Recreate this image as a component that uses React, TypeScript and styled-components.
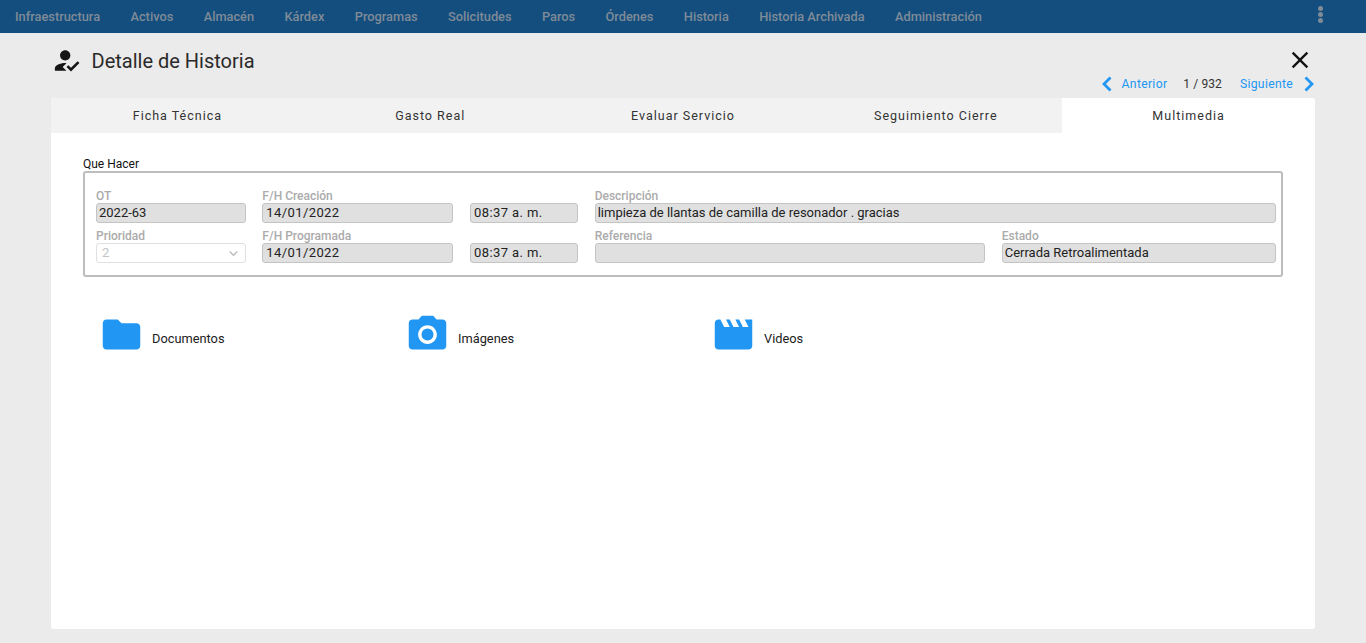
import React from "react";
import styled, { createGlobalStyle } from "styled-components";
import { MdFolder, MdHowToReg, MdMovie, MdPhotoCamera, MdClose, MdKeyboardArrowDown } from "react-icons/md";

const Global = createGlobalStyle`
  html, body { margin: 0; padding: 0; height: 100%; overflow: hidden; background: #ebebeb; }
  body { font-family: Roboto, "Liberation Sans", sans-serif; color: #212121; }
  * { box-sizing: border-box; }
`;

const Page = styled.div`
  height: 643px;
  display: flex;
  flex-direction: column;
`;

const TopBar = styled.nav`
  height: 33px;
  flex: none;
  background: #134e7f;
  display: flex;
  align-items: center;
  justify-content: space-between;
  padding: 0 43px 0 15px;
`;

const Menu = styled.div`
  display: flex;
  gap: 30.4px;
`;

const MenuItem = styled.span`
  font-size: 12.8px;
  font-weight: 500;
  line-height: 33px;
  color: #7f8b97;
`;

const Kebab = styled.div`
  display: flex;
  flex-direction: column;
  gap: 1px;
  margin-top: -5px;
`;

const Dot = styled.i`
  display: block;
  width: 5px;
  height: 5px;
  border-radius: 50%;
  background: #7f8b97;
`;

const Main = styled.main`
  flex: 1;
  display: flex;
  flex-direction: column;
  padding: 0 51px 14px;
`;

const Header = styled.header`
  height: 65px;
  flex: none;
  display: flex;
  justify-content: space-between;
`;

const TitleGroup = styled.div`
  display: flex;
  align-items: center;
  height: 56px;
`;

const TitleIcon = styled(MdHowToReg)`
  font-size: 31px;
  color: #161616;
  margin-right: 9.5px;
  margin-top: -2px;
`;

const Title = styled.h1`
  margin: 0;
  font-size: 20px;
  font-weight: 400;
  color: #2a2a2a;
`;

const Controls = styled.div`
  display: flex;
  flex-direction: column;
  align-items: flex-end;
`;

const CloseIcon = styled(MdClose)`
  font-size: 28px;
  color: #111;
  margin: 13px 1px 0 0;
`;

const Pager = styled.div`
  display: flex;
  align-items: center;
  height: 20px;
`;

const PagerLink = styled.span`
  font-size: 12.2px;
  letter-spacing: 0.3px;
  color: #2196f3;
`;

const PagerCount = styled.span`
  font-size: 12px;
  letter-spacing: 0.1px;
  color: #333;
  margin: -1px 18px 0 16px;
`;

const Chevron = styled.svg<{ $side: "left" | "right" }>`
  width: 11px;
  height: 16px;
  fill: none;
  stroke: #2196f3;
  stroke-width: 2.8;
  margin: ${(p) => (p.$side === "left" ? "0 10px 0 0" : "0 0 0 11px")};
`;

const Card = styled.section`
  flex: 1;
  background: #fff;
  border-radius: 3px;
  display: flex;
  flex-direction: column;
`;

const Tabs = styled.div`
  display: grid;
  grid-template-columns: repeat(5, 1fr);
  height: 35px;
  flex: none;
  background: #f2f2f2;
  border-radius: 3px 3px 0 0;
`;

const Tab = styled.div<{ $active?: boolean }>`
  display: flex;
  align-items: center;
  justify-content: center;
  font-size: 12.5px;
  letter-spacing: 1px;
  color: #333;
  background: ${(p) => (p.$active ? "#fff" : "transparent")};
  border-top-right-radius: ${(p) => (p.$active ? "3px" : "0")};
`;

const Body = styled.div`
  padding: 25px 32px 0;
`;

const GroupLabel = styled.div`
  font-size: 12px;
  line-height: 13px;
  color: #111;
`;

const Fieldset = styled.div`
  height: 106px;
  border: 2px solid #bdbdbd;
  border-radius: 3px;
  padding: 14px 5px 0 11px;
  display: grid;
  grid-template-columns: 149.7px 191px 108px 390.4px 274px;
  grid-auto-rows: 40px;
  column-gap: 16.67px;
`;

const Field = styled.div<{ $span?: number }>`
  grid-column: span ${(p) => p.$span ?? 1};
  display: flex;
  flex-direction: column;
  justify-content: flex-end;
  padding-bottom: 4px;
  min-width: 0;
`;

const FieldLabel = styled.label`
  font-size: 12px;
  line-height: 12px;
  height: 13px;
  font-weight: 500;
  color: #ababab;
  white-space: nowrap;
`;

const ReadOnly = styled.div`
  height: 20px;
  border: 1px solid #c4c4c4;
  border-radius: 3px;
  background: #e0e0e0;
  font-size: 13px;
  line-height: 18px;
  color: #222;
  padding-left: 2px;
  white-space: nowrap;
`;

const DateValue = styled.span`
  letter-spacing: 0.4px;
  padding-left: 1px;
`;

const SelectBox = styled.div`
  height: 20px;
  border: 1px solid #e0e0e0;
  border-radius: 3px;
  background: #fff;
  font-size: 13px;
  line-height: 18px;
  color: #c4c4c4;
  padding: 0 3px 0 5px;
  display: flex;
  align-items: center;
  justify-content: space-between;
`;

const SelectArrow = styled(MdKeyboardArrowDown)`
  font-size: 17px;
  color: #bdbdbd;
`;

const Media = styled.div`
  display: flex;
  padding: 35px 0 0 16px;
`;

const MediaItem = styled.div`
  width: 306px;
  display: flex;
  align-items: center;
  gap: 8px;
`;

const MediaLabel = styled.span`
  font-size: 12.8px;
  color: #212121;
  margin-top: 7px;
`;

const iconStyle = `font-size: 45px; color: #2196f3; flex: none;`;
const FolderIcon = styled(MdFolder)`${iconStyle}`;
const CameraIcon = styled(MdPhotoCamera)`${iconStyle}`;
const MovieIcon = styled(MdMovie)`${iconStyle}`;

const menu = ["Infraestructura", "Activos", "Almacén", "Kárdex", "Programas", "Solicitudes", "Paros", "Órdenes", "Historia", "Historia Archivada", "Administración"];
const tabs = ["Ficha Técnica", "Gasto Real", "Evaluar Servicio", "Seguimiento Cierre", "Multimedia"];

export default function App() {
  return (
    <Page>
      <Global />
      <TopBar>
        <Menu>
          {menu.map((m) => (
            <MenuItem key={m}>{m}</MenuItem>
          ))}
        </Menu>
        <Kebab>
          <Dot />
          <Dot />
          <Dot />
        </Kebab>
      </TopBar>
      <Main>
        <Header>
          <TitleGroup>
            <TitleIcon />
            <Title>Detalle de Historia</Title>
          </TitleGroup>
          <Controls>
            <CloseIcon />
            <Pager>
              <Chevron $side="left" viewBox="0 0 11 16">
                <path d="M9.5 1.5 3 8l6.5 6.5" />
              </Chevron>
              <PagerLink>Anterior</PagerLink>
              <PagerCount>1 / 932</PagerCount>
              <PagerLink>Siguiente</PagerLink>
              <Chevron $side="right" viewBox="0 0 11 16">
                <path d="M1.5 1.5 8 8l-6.5 6.5" />
              </Chevron>
            </Pager>
          </Controls>
        </Header>
        <Card>
          <Tabs>
            {tabs.map((t) => (
              <Tab key={t} $active={t === "Multimedia"}>
                {t}
              </Tab>
            ))}
          </Tabs>
          <Body>
            <GroupLabel>Que Hacer</GroupLabel>
            <Fieldset>
              <Field>
                <FieldLabel>OT</FieldLabel>
                <ReadOnly>2022-63</ReadOnly>
              </Field>
              <Field>
                <FieldLabel>F/H Creación</FieldLabel>
                <ReadOnly><DateValue>14/01/2022</DateValue></ReadOnly>
              </Field>
              <Field>
                <ReadOnly><DateValue>08:37 a. m.</DateValue></ReadOnly>
              </Field>
              <Field $span={2}>
                <FieldLabel>Descripción</FieldLabel>
                <ReadOnly>limpieza de llantas de camilla de resonador . gracias</ReadOnly>
              </Field>
              <Field>
                <FieldLabel>Prioridad</FieldLabel>
                <SelectBox>
                  2
                  <SelectArrow />
                </SelectBox>
              </Field>
              <Field>
                <FieldLabel>F/H Programada</FieldLabel>
                <ReadOnly><DateValue>14/01/2022</DateValue></ReadOnly>
              </Field>
              <Field>
                <ReadOnly><DateValue>08:37 a. m.</DateValue></ReadOnly>
              </Field>
              <Field>
                <FieldLabel>Referencia</FieldLabel>
                <ReadOnly />
              </Field>
              <Field>
                <FieldLabel>Estado</FieldLabel>
                <ReadOnly>Cerrada Retroalimentada</ReadOnly>
              </Field>
            </Fieldset>
            <Media>
              <MediaItem>
                <FolderIcon />
                <MediaLabel>Documentos</MediaLabel>
              </MediaItem>
              <MediaItem>
                <CameraIcon />
                <MediaLabel>Imágenes</MediaLabel>
              </MediaItem>
              <MediaItem>
                <MovieIcon />
                <MediaLabel>Videos</MediaLabel>
              </MediaItem>
            </Media>
          </Body>
        </Card>
      </Main>
    </Page>
  );
}
